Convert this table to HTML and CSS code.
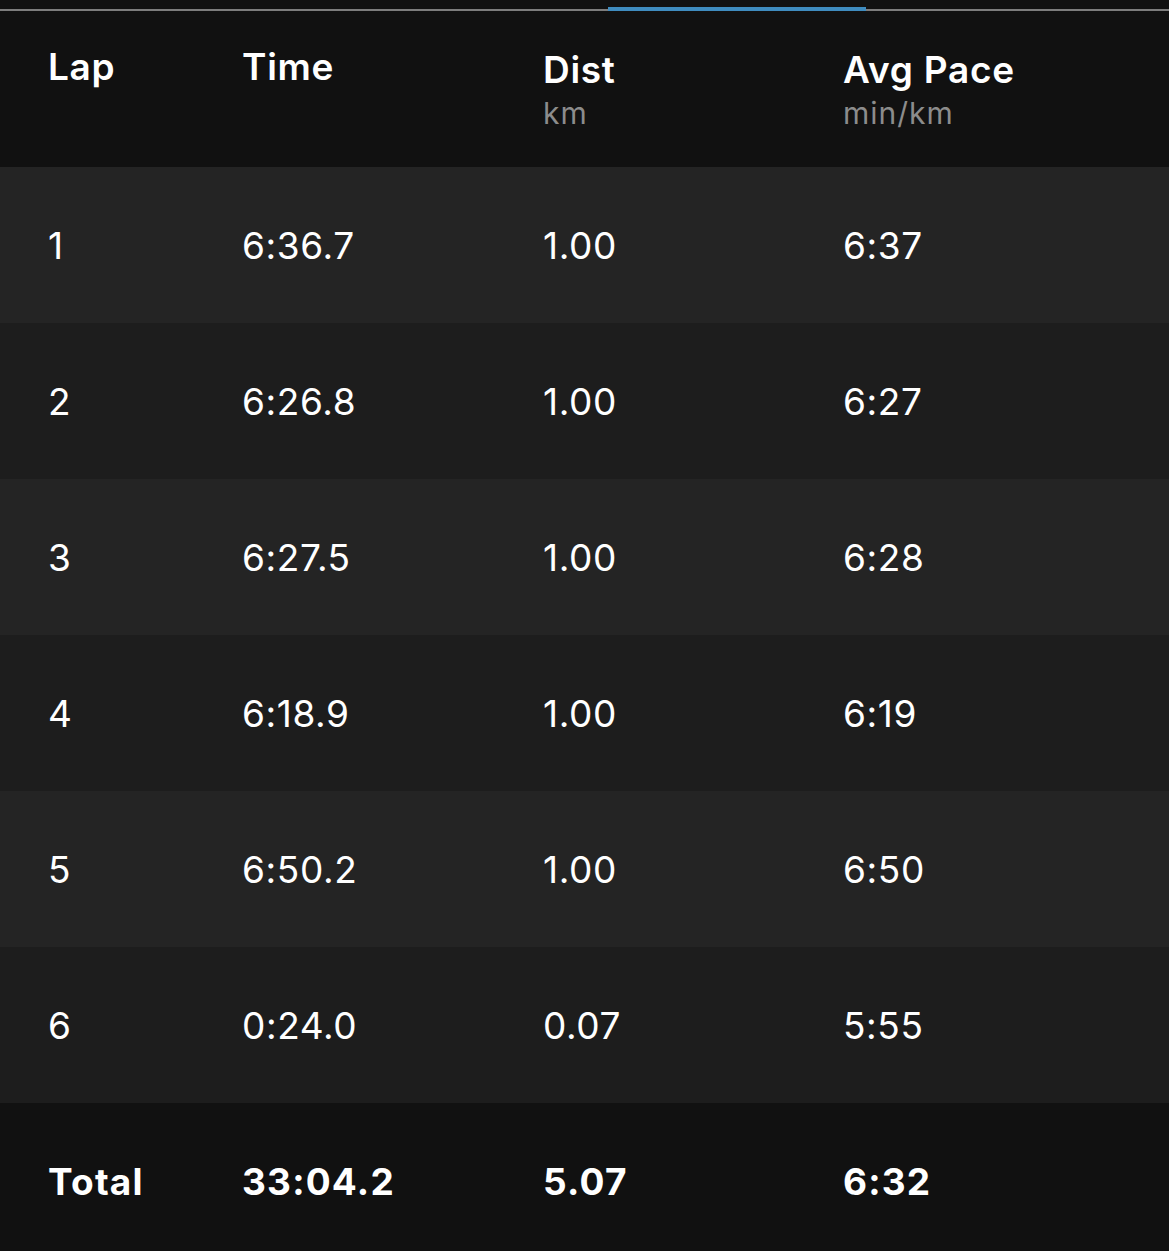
FILE: index.html
```html
<!DOCTYPE html>
<html lang="en">
<head>
<meta charset="utf-8">
<title>Laps</title>
<link rel="stylesheet" href="styles.css">
</head>
<body>
<div class="tabbar"><span class="tab-indicator"></span></div>
<div class="laps">
  <div class="row head">
    <div class="cell"><div class="title">Lap</div></div>
    <div class="cell"><div class="title">Time</div></div>
    <div class="cell sub"><div class="title">Dist</div><div class="unit">km</div></div>
    <div class="cell sub"><div class="title">Avg Pace</div><div class="unit">min/km</div></div>
  </div>
  <div class="row odd"><div class="cell">1</div><div class="cell">6:36.7</div><div class="cell">1.00</div><div class="cell">6:37</div></div>
  <div class="row even"><div class="cell">2</div><div class="cell">6:26.8</div><div class="cell">1.00</div><div class="cell">6:27</div></div>
  <div class="row odd"><div class="cell">3</div><div class="cell">6:27.5</div><div class="cell">1.00</div><div class="cell">6:28</div></div>
  <div class="row even"><div class="cell">4</div><div class="cell">6:18.9</div><div class="cell">1.00</div><div class="cell">6:19</div></div>
  <div class="row odd"><div class="cell">5</div><div class="cell">6:50.2</div><div class="cell">1.00</div><div class="cell">6:50</div></div>
  <div class="row even"><div class="cell">6</div><div class="cell">0:24.0</div><div class="cell">0.07</div><div class="cell">5:55</div></div>
  <div class="row total"><div class="cell">Total</div><div class="cell">33:04.2</div><div class="cell">5.07</div><div class="cell">6:32</div></div>
</div>
</body>
</html>
```
FILE: styles.css
```css
html, body {
  margin: 0;
  padding: 0;
  background: #111111;
  color: #ffffff;
  font-family: Inter, "Noto Sans", "Liberation Sans", sans-serif;
}

.tabbar {
  height: 9px;
  border-bottom: 2px solid #7d7d7d;
  position: relative;
}

.tab-indicator {
  position: absolute;
  left: 608px;
  width: 258px;
  top: 7px;
  height: 4px;
  background: #3f8cbf;
}

.laps {
  display: flex;
  flex-direction: column;
}

.row {
  display: grid;
  grid-template-columns: 194px 301px 300px 1fr;
  padding-left: 48px;
  height: 156px;
  align-items: center;
  font-size: 37px;
  letter-spacing: 0.6px;
}

.odd { background: #242424; }
.even { background: #1d1d1d; }

.head {
  background: #111111;
  align-items: start;
  padding-top: 34px;
  box-sizing: border-box;
}

.head .title {
  font-weight: 600;
  font-size: 37px;
  line-height: 44px;
  letter-spacing: 0.7px;
}

.head .sub {
  padding-top: 3px;
}

.unit {
  color: #8c8c8c;
  font-size: 30px;
  line-height: 34px;
  margin-top: 4px;
  letter-spacing: 1px;
}

.total {
  background: #111111;
  font-weight: 700;
  font-size: 37px;
  letter-spacing: 1.2px;
}
```
